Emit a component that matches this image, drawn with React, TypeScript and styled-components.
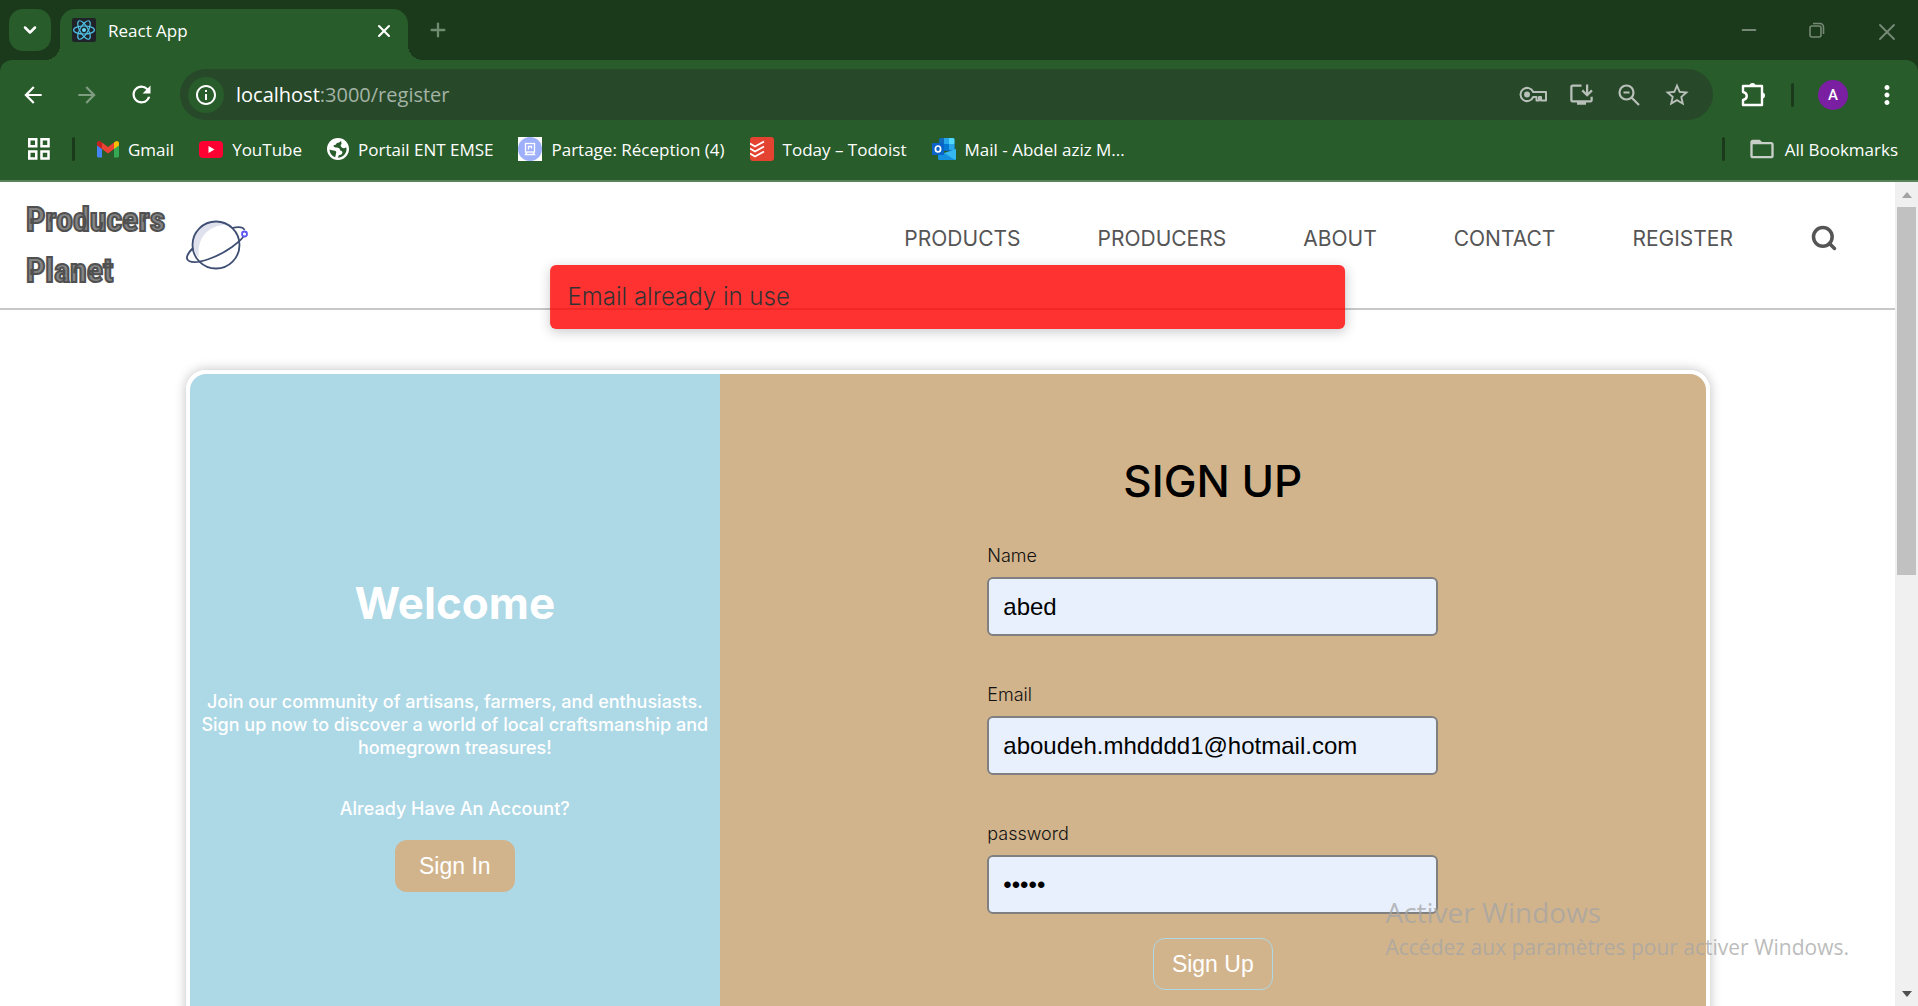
import React, { useState } from "react";
import styled, { createGlobalStyle } from "styled-components";
import {
  MdArrowBack,
  MdArrowForward,
  MdRefresh,
  MdInfoOutline,
  MdOutlineInstallDesktop,
  MdStarBorder,
  MdMoreVert,
  MdFolderOpen,
} from "react-icons/md";
import { ChevronDown, Plus, X, Search, Minus } from "lucide-react";

const uiFont = `"Open Sans", "Noto Sans", sans-serif`;
const siteFont = `Inter, "Liberation Sans", sans-serif`;
const controlFont = `"Liberation Sans", Arial, sans-serif`;

const GlobalStyle = createGlobalStyle`
  *, *::before, *::after { box-sizing: border-box; }
  body { margin: 0; overflow: hidden; background: #fff; }
  button { font: inherit; border: 0; padding: 0; background: none; cursor: pointer; }
  a { color: inherit; text-decoration: none; }
  svg { display: block; flex: none; }
`;

const Screen = styled.div`
  position: relative;
  display: flex;
  flex-direction: column;
  height: 100vh;
  overflow: hidden;
`;

/* ---------- browser frame ---------- */

const Chrome = styled.header`
  flex: none;
  background: #1b3a1b;
  color: #fff;
  font-family: ${uiFont};
`;

const TabStrip = styled.div`
  display: flex;
  align-items: center;
  height: 60px;
  padding: 9px 21px 0 9px;
`;

const TabSearch = styled.button`
  display: grid;
  place-items: center;
  width: 42px;
  height: 42px;
  margin: 0 9px 9px 0;
  border-radius: 14px;
  background: #285c2b;
  color: #fff;
`;

const Tab = styled.div`
  position: relative;
  display: flex;
  align-items: center;
  width: 348px;
  height: 51px;
  padding: 0 16px 9px 12px;
  gap: 12px;
  border-radius: 15px 15px 0 0;
  background: #285c2b;
  font-size: 17px;

  &::before,
  &::after {
    content: "";
    position: absolute;
    bottom: 0;
    width: 15px;
    height: 15px;
  }
  &::before {
    right: 100%;
    background: radial-gradient(circle at 0 0, transparent 15px, #285c2b 15px);
  }
  &::after {
    left: 100%;
    background: radial-gradient(circle at 100% 0, transparent 15px, #285c2b 15px);
  }
`;

const TabTitle = styled.span`
  flex: 1;
`;

const IconButton = styled.button<{ $tone?: string; $size?: number }>`
  display: grid;
  place-items: center;
  flex: none;
  width: ${(p) => p.$size ?? 48}px;
  height: ${(p) => p.$size ?? 48}px;
  color: ${(p) => p.$tone ?? "#fff"};
`;

const NewTab = styled(IconButton)`
  margin: 0 auto 9px 12px;
`;

const WindowControls = styled.div`
  display: flex;
  gap: 44px;
  margin-bottom: 9px;
`;

const Toolbar = styled.div`
  display: flex;
  align-items: center;
  height: 69px;
  padding: 0 7px 0 9px;
  background: #285c2b;
  border-radius: 12px 12px 0 0;
`;

const NavButtons = styled.div`
  display: flex;
  gap: 6px;
  margin-right: 15px;
`;

const Omnibox = styled.div`
  display: flex;
  align-items: center;
  flex: 1;
  height: 51px;
  padding: 0 12px 0 8px;
  border-radius: 26px;
  background: #27492a;
`;

const SiteInfo = styled.button`
  display: grid;
  place-items: center;
  width: 36px;
  height: 36px;
  border-radius: 50%;
  background: #285c2b;
  color: #fff;
`;

const Address = styled.div`
  flex: 1;
  margin-left: 12px;
  color: #a4b3a5;
  font-size: 20px;

  b {
    color: #fff;
    font-weight: 400;
  }
`;

const Divider = styled.span`
  flex: none;
  width: 3px;
  height: 24px;
  border-radius: 2px;
  background: #1b3a1b;
`;

const ToolbarEnd = styled.div`
  display: flex;
  align-items: center;
  margin-left: 16px;

  ${Divider} {
    margin: 0 24px 0 14px;
  }
`;

const Avatar = styled.button`
  width: 30px;
  height: 30px;
  margin-right: 15px;
  border-radius: 50%;
  background: #7b1fa2;
  color: #fff;
  font: 500 15px Roboto, sans-serif;
`;

const Bookmarks = styled.nav`
  display: flex;
  align-items: center;
  height: 53px;
  padding: 0 20px 11px 28px;
  gap: 22px;
  border-bottom: 2px solid #58845c;
  background: #285c2b;
  font-size: 17px;
`;

const BookmarkList = styled.div`
  display: flex;
  gap: 25px;
`;

const Bookmark = styled.a`
  display: flex;
  align-items: center;
  gap: 9px;
  white-space: nowrap;
`;

const AllBookmarks = styled.div`
  display: flex;
  align-items: center;
  gap: 23px;
  margin-left: auto;
`;

/* ---------- web page ---------- */

const Viewport = styled.div`
  display: flex;
  flex: 1;
  min-height: 0;
`;

const Page = styled.div`
  position: relative;
  flex: 1;
  min-width: 0;
  overflow: hidden;
  background: #fff;
  font-family: ${siteFont};
`;

const ScrollTrack = styled.div`
  display: flex;
  flex-direction: column;
  align-items: center;
  width: 23px;
  background: #f0f0f0;
`;

const ScrollArrow = styled.span<{ $down?: boolean }>`
  flex: none;
  display: grid;
  place-items: center;
  height: 25px;
  margin-top: ${(p) => (p.$down ? "auto" : "0")};

  &::after {
    content: "";
    border: 5px solid transparent;
    border-width: ${(p) => (p.$down ? "6px 5px 0" : "0 5px 6px")};
    border-color: ${(p) => (p.$down ? "#505050 transparent" : "transparent transparent #a3a3a3")};
  }
`;

const ScrollThumb = styled.span`
  width: 19px;
  height: 368px;
  background: #c1c1c1;
`;

const SiteHeader = styled.header`
  display: flex;
  align-items: center;
  height: 128px;
  padding: 0 57px 0 26px;
  border-bottom: 2px solid #c8c8c8;
  color: #555;
`;

const Brand = styled.a`
  display: flex;
  align-items: center;
  gap: 20px;
  margin-right: auto;
`;

const BrandName = styled.span`
  width: 140px;
  color: #858585;
  font: 700 34px/51px "Liberation Sans Narrow", "Roboto Condensed", "Open Sans Condensed", "DejaVu Sans Condensed", sans-serif;
  -webkit-text-stroke: 2px #505050;
`;

const SiteNav = styled.nav`
  display: flex;
  align-items: center;
  gap: 77px;
  margin-bottom: 14px;
  font-size: 21px;
`;

const Toast = styled.div`
  position: absolute;
  top: 83px;
  left: 50%;
  width: 42%;
  padding: 16px 18px;
  transform: translateX(-50%);
  border-radius: 6px;
  background: #f00;
  opacity: 0.8;
  box-shadow: 0 3px 12px rgba(0, 0, 0, 0.25);
  color: #000;
  font-size: 24px;
  font-weight: 300;
  line-height: 32px;
`;

const Card = styled.main`
  box-sizing: content-box;
  display: flex;
  width: 80%;
  min-height: 720px;
  margin: 60px auto;
  overflow: hidden;
  border: 4px solid #fff;
  border-radius: 20px;
  box-shadow: 0 0 12px rgba(0, 0, 0, 0.25);
`;

const Welcome = styled.section`
  display: flex;
  flex-direction: column;
  align-items: center;
  width: 35%;
  padding: 200px 4px 0;
  background: #add8e6;
  color: #fff;
  font-size: 18px;
  font-weight: 500;
  line-height: 23px;
  text-align: center;
`;

const WelcomeTitle = styled.h1`
  margin: 0 0 58px;
  font-size: 44px;
  line-height: 58px;
`;

const WelcomeText = styled.p`
  margin: 0 0 38px;
`;

const AccountHint = styled.p`
  margin: 0 0 20px;
`;

const PillButton = styled.button<{ $outlined?: boolean }>`
  width: 120px;
  height: 52px;
  border: ${(p) => (p.$outlined ? "1px solid #add8e6" : "0")};
  border-radius: 12px;
  background: #d2b48c;
  color: #fff;
  font-family: ${controlFont};
  font-size: 23px;
`;

const SignUpForm = styled.form`
  display: flex;
  flex: 1;
  flex-direction: column;
  align-items: center;
  padding-top: 77px;
  background: #d2b48c;
`;

const FormTitle = styled.h2`
  margin: 0 0 33px;
  color: #000;
  font-size: 44px;
  font-weight: 500;
  line-height: 60px;
`;

const Field = styled.div`
  display: flex;
  flex-direction: column;
  width: 451px;
  max-width: 90%;
  margin-bottom: 47px;

  &:last-of-type {
    margin-bottom: 24px;
  }
`;

const Label = styled.label`
  margin-bottom: 9px;
  color: #111;
  font-size: 18px;
  font-weight: 300;
  line-height: 24px;
`;

const TextInput = styled.input`
  width: 100%;
  height: 59px;
  padding: 0 14px;
  border: 2px solid #808080;
  border-radius: 6px;
  outline: 0;
  background: #e8f0fe;
  color: #000;
  font-family: ${controlFont};
  font-size: 24px;
`;

const Watermark = styled.div`
  position: absolute;
  right: 69px;
  bottom: 43px;
  color: rgba(165, 165, 165, 0.75);
  font: 21px/32px ${uiFont};
  pointer-events: none;

  strong {
    display: block;
    font-size: 28px;
    font-weight: 400;
    line-height: 38px;
  }
`;

/* ---------- drawings ---------- */

const ReactIcon = () => (
  <svg width="24" height="24" viewBox="0 0 24 24" fill="none" stroke="#4fc3e8" strokeWidth="1.2">
    <rect width="24" height="24" rx="2" fill="#20232a" stroke="none" />
    <circle cx="12" cy="12" r="2" fill="#61dafb" stroke="none" />
    <ellipse cx="12" cy="12" rx="10.4" ry="4" />
    <ellipse cx="12" cy="12" rx="10.4" ry="4" transform="rotate(60 12 12)" />
    <ellipse cx="12" cy="12" rx="10.4" ry="4" transform="rotate(120 12 12)" />
  </svg>
);

const RestoreIcon = () => (
  <svg width="16" height="16" viewBox="0 0 16 16" fill="none" stroke="currentColor" strokeWidth="1.6">
    <rect x="1" y="4" width="11" height="11" rx="2" />
    <path d="M4 1.5h7a3.5 3.5 0 0 1 3.5 3.5v7" />
  </svg>
);

const KeyIcon = () => (
  <svg width="28" height="18" viewBox="0 0 28 18" fill="none" stroke="currentColor" strokeWidth="2">
    <path d="M14.2 6H27v8.5h-5V11h-2v3.5h-2.500V11h-3.300A6.600 6.600 0 1 1 14.200 6Z" strokeLinejoin="round" />
    <circle cx="8" cy="8.500" r="3" fill="currentColor" stroke="none" />
  </svg>
);

const ZoomOutIcon = () => (
  <svg width="22" height="22" viewBox="0 0 22 22" fill="none" stroke="currentColor" strokeWidth="2.2">
    <circle cx="8.500" cy="8.500" r="7" />
    <path d="M13.500 13.500 21 21M5.500 8.500h6" />
  </svg>
);

const PuzzleIcon = () => (
  <svg width="26" height="26" viewBox="0 0 26 26" fill="none" stroke="currentColor" strokeWidth="2.400" strokeLinejoin="round">
    <path d="M3 4h19v19H3v-5c5-1 5-7 0-8Z" />
    <path d="M9.500 4a3 3 0 0 1 6 0ZM22 10.500a3 3 0 0 1 0 6Z" fill="currentColor" stroke="none" />
  </svg>
);

const AppsIcon = () => (
  <svg width="22" height="22" viewBox="0 0 22 22" fill="none" stroke="#fff" strokeWidth="2.500">
    <rect x="1.250" y="1.250" width="7" height="7" />
    <rect x="13.500" y="1.250" width="7" height="7" />
    <rect x="1.250" y="13.500" width="7" height="7" />
    <rect x="13.500" y="13.500" width="7" height="7" />
  </svg>
);

const GmailIcon = () => (
  <svg width="22" height="18" viewBox="0 0 22 17">
    <path d="M0 3v12.500A1.500 1.500 0 0 0 1.500 17H5V6.500Z" fill="#4285f4" />
    <path d="M22 3v12.500a1.500 1.500 0 0 1-1.500 1.500H17V6.500Z" fill="#34a853" />
    <path d="M5 2v6.500l6 4.500 6-4.500V2l-6 4.500Z" fill="#ea4335" />
    <path d="M0 2.500V5l5 3.500V2L4 1.200C2.400-.2 0 .6 0 2.500Z" fill="#c5221f" />
    <path d="M22 2.500V5l-5 3.500V2l1-.8c1.600-1.400 4-.6 4 1.300Z" fill="#fbbc04" />
  </svg>
);

const YouTubeIcon = () => (
  <svg width="24" height="17" viewBox="0 0 24 17">
    <rect width="24" height="17" rx="4" fill="#ff0033" />
    <path d="M9.500 5v7l6-3.500Z" fill="#fff" />
  </svg>
);

const GlobeIcon = () => (
  <svg width="22" height="22" viewBox="0 0 22 22">
    <circle cx="11" cy="11" r="11" fill="#fff" />
    <path
      d="M14 2.600C13.600 4.400 12 4.800 9.800 5c-.6 1.600-1.500 2.200-3.200 2.300-.2 1.500.8 2.200 2.600 2.100 2.500-.1 3.800.6 3.900 3 1.700.2 2.500.9 2.300 2.300-.2 1.700-1.700 2.200-3.400 2.300l-1.200 2.800c4.700 0 8.700-3.700 8.700-8.500 0-.8-.1-1.400-.3-2.100-1.600 1.300-3.200 1.200-4.400.2-1.400-1-1.600-2.400-.2-3.300Z"
      fill="#285c2b"
    />
    <path d="M2.500 11.500c1.800 1.100 3.800.8 5.500 1.200 1.200.3 1.600 1.500 1 2.700l-.8 3.800c-3.200-1-5.600-4-5.700-7.700Z" fill="#285c2b" />
  </svg>
);

const PartageIcon = () => (
  <svg width="24" height="24" viewBox="0 0 24 24" fill="none" stroke="#fff" strokeWidth="1.300">
    <rect width="24" height="24" fill="#fff" stroke="none" />
    <ellipse cx="12" cy="12" rx="12" ry="12" fill="#9fb0fb" stroke="none" />
    <rect x="7.500" y="6.500" width="9" height="8.500" />
    <path d="M10.500 9v3.500M10.500 9.500h3v2M9 15l-1.500 2.500h9L15 15" />
  </svg>
);

const TodoistIcon = () => (
  <svg width="24" height="24" viewBox="0 0 24 24" fill="none" stroke="#fff" strokeWidth="1.800">
    <rect width="24" height="24" rx="3" fill="#e44332" stroke="none" />
    <path d="m0 6.500 5 3 9-5M0 11.500l5 3 9-5M0 16.500l5 3 9-5" />
  </svg>
);

const OutlookIcon = () => (
  <svg width="24" height="22" viewBox="0 0 24 22">
    <path d="M7 1.500A1.500 1.500 0 0 1 8.500 0H21a1.500 1.500 0 0 1 1.500 1.500V13H7Z" fill="#0f6cbd" />
    <path d="M12 0h5v6h-5Z" fill="#28a8ea" />
    <path d="M17 0h4a1.500 1.500 0 0 1 1.500 1.500V6H17Z" fill="#50d9ff" />
    <path d="M12 6h5v6h-5Z" fill="#0078d4" />
    <path d="M17 6h5.500v6H17Z" fill="#28a8ea" />
    <path d="M24 11v9.500a1.500 1.500 0 0 1-1.500 1.500h-15A1.500 1.500 0 0 1 6 20.500V11l9 5.500Z" fill="#1490df" />
    <path d="M24 11v9.500a1.500 1.500 0 0 1-1 1.400L12 15Z" fill="#35b8f1" />
    <rect y="5" width="12" height="12" rx="1" fill="#0a63c9" />
    <ellipse cx="6" cy="11" rx="2.600" ry="3" fill="none" stroke="#fff" strokeWidth="1.700" />
  </svg>
);

const PlanetLogo = () => (
  <svg width="62" height="50" viewBox="0 0 62 50" fill="none" stroke="#3f4f73" strokeWidth="1.800">
    <path d="M7 25a23.500 23.500 0 0 1 34-20C24 4 10 17 13 38A23 23 0 0 1 7 25Z" fill="#dfe2ec" stroke="none" />
    <circle cx="30" cy="25" r="23.500" />
    <path d="M7 28C1 34-1 39 3 41c8 4 29-4 43-14 8-6 12-10 12-12M46 8c6-1.500 11-1.500 12.500 2" />
    <circle cx="58.500" cy="14" r="2.500" fill="#fff" stroke="#5b57f5" />
  </svg>
);

/* ---------- content ---------- */

const bookmarks = [
  { label: "Gmail", icon: <GmailIcon /> },
  { label: "YouTube", icon: <YouTubeIcon /> },
  { label: "Portail ENT EMSE", icon: <GlobeIcon /> },
  { label: "Partage: Réception (4)", icon: <PartageIcon /> },
  { label: "Today – Todoist", icon: <TodoistIcon /> },
  { label: "Mail - Abdel aziz M...", icon: <OutlookIcon /> },
];

const links = ["PRODUCTS", "PRODUCERS", "ABOUT", "CONTACT", "REGISTER"];

const fields = [
  { id: "name", label: "Name", type: "text" },
  { id: "email", label: "Email", type: "email" },
  { id: "password", label: "password", type: "password" },
];

function BrowserFrame() {
  return (
    <Chrome>
      <TabStrip>
        <TabSearch aria-label="Search tabs">
          <ChevronDown size={20} strokeWidth={3} />
        </TabSearch>
        <Tab>
          <ReactIcon />
          <TabTitle>React App</TabTitle>
          <IconButton $size={18} aria-label="Close tab">
            <X size={20} strokeWidth={2.5} />
          </IconButton>
        </Tab>
        <NewTab $size={36} $tone="#6f8b70" aria-label="New tab">
          <Plus size={22} strokeWidth={2.5} />
        </NewTab>
        <WindowControls>
          <IconButton $size={24} $tone="#768976" aria-label="Minimize">
            <Minus size={22} strokeWidth={2} />
          </IconButton>
          <IconButton $size={24} $tone="#768976" aria-label="Restore">
            <RestoreIcon />
          </IconButton>
          <IconButton $size={24} $tone="#768976" aria-label="Close">
            <X size={28} strokeWidth={1.6} />
          </IconButton>
        </WindowControls>
      </TabStrip>
      <Toolbar>
        <NavButtons>
          <IconButton aria-label="Back"><MdArrowBack size={26} /></IconButton>
          <IconButton $tone="#7f9d80" aria-label="Forward"><MdArrowForward size={26} /></IconButton>
          <IconButton aria-label="Reload"><MdRefresh size={27} /></IconButton>
        </NavButtons>
        <Omnibox>
          <SiteInfo aria-label="Site information"><MdInfoOutline size={24} /></SiteInfo>
          <Address><b>localhost</b>:3000/register</Address>
          <IconButton $tone="#b9bfb9" aria-label="Passwords"><KeyIcon /></IconButton>
          <IconButton $tone="#b9bfb9" aria-label="Install"><MdOutlineInstallDesktop size={27} /></IconButton>
          <IconButton $tone="#b9bfb9" aria-label="Zoom"><ZoomOutIcon /></IconButton>
          <IconButton $tone="#b9bfb9" aria-label="Bookmark"><MdStarBorder size={28} /></IconButton>
        </Omnibox>
        <ToolbarEnd>
          <IconButton aria-label="Extensions"><PuzzleIcon /></IconButton>
          <Divider />
          <Avatar>A</Avatar>
          <IconButton aria-label="Menu"><MdMoreVert size={30} /></IconButton>
        </ToolbarEnd>
      </Toolbar>
      <Bookmarks>
        <AppsIcon />
        <Divider />
        <BookmarkList>
          {bookmarks.map((b) => (
            <Bookmark href="#" key={b.label}>
              {b.icon}
              {b.label}
            </Bookmark>
          ))}
        </BookmarkList>
        <AllBookmarks>
          <Divider />
          <Bookmark href="#">
            <MdFolderOpen size={28} color="#c8cfc8" />
            All Bookmarks
          </Bookmark>
        </AllBookmarks>
      </Bookmarks>
    </Chrome>
  );
}

export default function App() {
  const [values, setValues] = useState<Record<string, string>>({
    name: "abed",
    email: "aboudeh.mhdddd1@hotmail.com",
    password: "abcde",
  });

  return (
    <Screen>
      <GlobalStyle />
      <BrowserFrame />
      <Viewport>
        <Page>
          <SiteHeader>
            <Brand href="#">
              <BrandName>Producers Planet</BrandName>
              <PlanetLogo />
            </Brand>
            <SiteNav>
              {links.map((l) => (
                <a href="#" key={l}>{l}</a>
              ))}
              <IconButton $size={28} $tone="#555" aria-label="Search">
                <Search size={28} strokeWidth={3} />
              </IconButton>
            </SiteNav>
          </SiteHeader>
          <Card>
            <Welcome>
              <WelcomeTitle>Welcome</WelcomeTitle>
              <WelcomeText>
                Join our community of artisans, farmers, and enthusiasts. Sign up now to discover a
                world of local craftsmanship and homegrown treasures!
              </WelcomeText>
              <AccountHint>Already Have An Account?</AccountHint>
              <PillButton>Sign In</PillButton>
            </Welcome>
            <SignUpForm onSubmit={(e) => e.preventDefault()}>
              <FormTitle>SIGN UP</FormTitle>
              {fields.map((f) => (
                <Field key={f.id}>
                  <Label htmlFor={f.id}>{f.label}</Label>
                  <TextInput
                    id={f.id}
                    type={f.type}
                    value={values[f.id]}
                    onChange={(e) => setValues({ ...values, [f.id]: e.target.value })}
                  />
                </Field>
              ))}
              <PillButton $outlined type="submit">Sign Up</PillButton>
            </SignUpForm>
          </Card>
          <Toast role="alert">Email already in use</Toast>
        </Page>
        <ScrollTrack>
          <ScrollArrow />
          <ScrollThumb />
          <ScrollArrow $down />
        </ScrollTrack>
      </Viewport>
      <Watermark>
        <strong>Activer Windows</strong>
        Accédez aux paramètres pour activer Windows.
      </Watermark>
    </Screen>
  );
}
